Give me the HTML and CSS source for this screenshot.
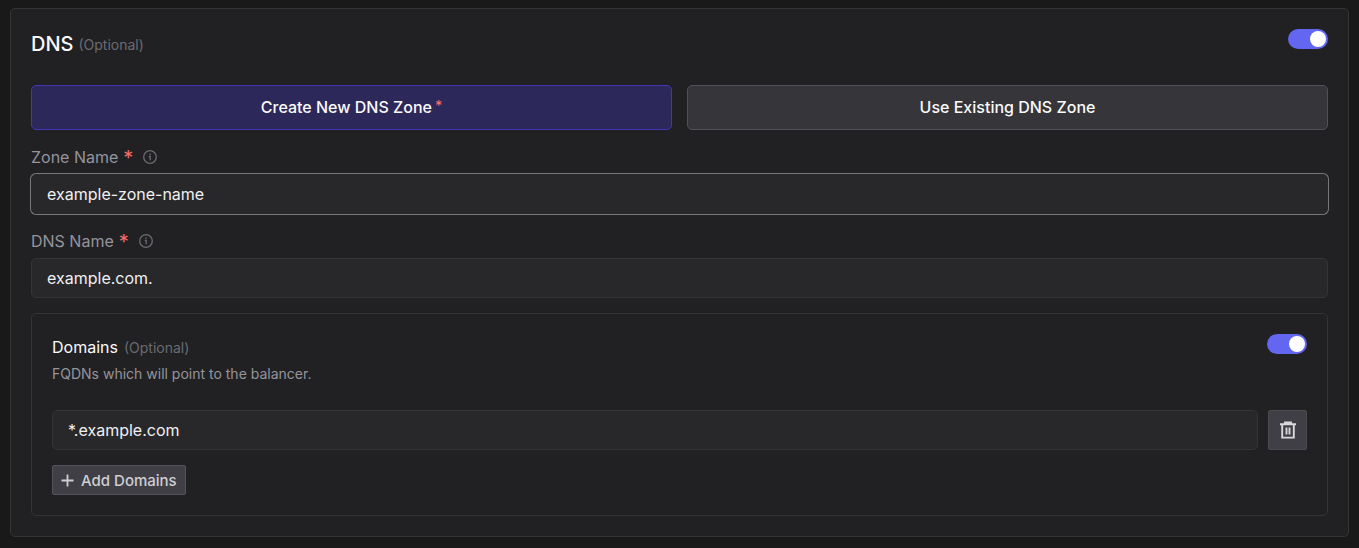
FILE: index.html
```
<!DOCTYPE html>
<html lang="en">
<head>
  <meta charset="UTF-8" />
  <meta name="viewport" content="width=device-width, initial-scale=1.0"/>
  <title>DNS</title>
  <link rel="stylesheet" href="styles.css">
</head>

<body>
  <form class="card">
    <div class="card-header">
      <h2 class="card-title"><label for="dns">DNS</label> <span class="optional">(Optional)</span></h2>
      <input type="checkbox" class="toggle" id="dns" checked>
    </div>

    <div class="tabs">
      <button type="button" class="tab active">Create New DNS Zone<span class="tab-required">*</span></button>
      <button type="button" class="tab">Use Existing DNS Zone</button>
    </div>

    <div class="field">
      <div class="field-label">
        <label for="zone-name">Zone Name<span class="required">*</span></label>
        <svg class="info" viewBox="0 0 14 14" aria-hidden="true">
          <circle cx="7" cy="7" r="6.3"/>
          <path d="M5.8 6.5h1.4v3.8M7 3.6v1.4"/>
        </svg>
      </div>
      <input type="text" class="text-input focused" id="zone-name" value="example-zone-name">
    </div>

    <div class="field">
      <div class="field-label">
        <label for="dns-name">DNS Name<span class="required">*</span></label>
        <svg class="info" viewBox="0 0 14 14" aria-hidden="true">
          <circle cx="7" cy="7" r="6.3"/>
          <path d="M5.8 6.5h1.4v3.8M7 3.6v1.4"/>
        </svg>
      </div>
      <input type="text" class="text-input" id="dns-name" value="example.com.">
    </div>

    <section class="domains">
      <div class="domains-header">
        <div>
          <h3 class="domains-title"><label for="domains">Domains</label> <span class="optional">(Optional)</span></h3>
          <p class="domains-text">FQDNs which will point to the balancer.</p>
        </div>
        <input type="checkbox" class="toggle" id="domains" checked>
      </div>

      <div class="domain-row">
        <input type="text" class="text-input" aria-label="Domain" value="*.example.com">
        <button type="button" class="delete-btn" aria-label="Delete domain">
          <svg viewBox="0 0 18 18" aria-hidden="true">
            <path d="M5 1.5h8M1 3.2h16M3.2 3v13.6h11.6V3M7.5 6.5v7M10.5 6.5v7"/>
          </svg>
        </button>
      </div>

      <button type="button" class="add-btn">
        <svg viewBox="0 0 13 13" aria-hidden="true"><path d="M6.5 0.5v12M0.5 6.5h12"/></svg>
        Add Domains
      </button>
    </section>
  </form>
</body>
</html>
```
FILE: styles.css
```
* {
  box-sizing: border-box;
}

body {
  margin: 0;
  padding: 8px 10px 11px;
  background: #19191a;
  color: #fafafa;
  font-family: 'Inter', sans-serif;
  font-size: 16px;
}

h2, h3, p {
  margin: 0;
}

button, input {
  font-family: inherit;
  font-size: 16px;
}

/* outer card */
.card {
  padding: 20px;
  background: #212123;
  border: 1px solid #343437;
  border-radius: 5px;
}

.card-header {
  display: flex;
  justify-content: space-between;
  align-items: flex-start;
  margin-bottom: 26px;
}

.card-title {
  display: flex;
  align-items: center;
  gap: 5px;
  height: 30px;
  font-size: 20px;
  font-weight: 500;
}

.optional {
  color: #6b6a71;
  font-size: 14px;
  font-weight: 400;
}

/* toggle switch */
.toggle {
  appearance: none;
  flex: none;
  display: flex;
  justify-content: flex-end;
  width: 40px;
  height: 20px;
  margin: 0;
  padding: 2px;
  border-radius: 10px;
  background: #6366f1;
  cursor: pointer;
}

.toggle::before {
  content: "";
  width: 16px;
  height: 16px;
  border-radius: 50%;
  background: white;
}

.toggle:not(:checked) {
  justify-content: flex-start;
  background: #45454b;
}

/* zone tabs */
.tabs {
  display: grid;
  grid-template-columns: 1fr 1fr;
  gap: 15px;
  margin-bottom: 15px;
}

.tab {
  height: 45px;
  padding: 0 16px 2px;
  border: 1px solid #505056;
  border-radius: 5px;
  background: #363539;
  color: #fafafa;
  font-weight: 500;
  cursor: pointer;
}

.tab.active {
  border-color: #4136b5;
  background: #2d285a;
}

.tab-required {
  margin-left: 3px;
  color: #f16c6c;
  font-size: 14px;
  line-height: 14px;
  vertical-align: 2px;
}

/* text fields */
.field {
  margin-bottom: 15px;
}

.field-label {
  display: flex;
  align-items: center;
  gap: 10px;
  height: 24px;
  margin-bottom: 5px;
  color: #95949c;
}

.required {
  margin-left: 5px;
  color: #f16c6c;
  font-size: 20px;
  line-height: 16px;
  vertical-align: -2px;
}

.info {
  width: 14px;
  height: 14px;
  fill: none;
  stroke: #6b6a71;
  stroke-width: 1.3;
}

.text-input {
  display: block;
  width: 100%;
  height: 40px;
  padding: 0 15px 1px;
  border: 1px solid #343437;
  border-radius: 5px;
  background: #28282a;
  color: #f0f0f2;
  outline: none;
}

.text-input.focused,
.text-input:focus {
  border-color: #28282a;
  box-shadow: 0 0 0 1px #77767d;
}

/* domains section */
.domains {
  padding: 20px;
  border: 1px solid #343437;
  border-radius: 5px;
}

.domains-header {
  display: flex;
  justify-content: space-between;
  align-items: flex-start;
  margin-bottom: 22px;
}

.domains-title {
  display: flex;
  align-items: center;
  gap: 6px;
  height: 26px;
  font-size: 16px;
  font-weight: 400;
}

.domains-text {
  color: #95949c;
  font-size: 14px;
  line-height: 28px;
}

.domain-row {
  display: flex;
  gap: 10px;
  margin-bottom: 15px;
}

.delete-btn {
  flex: none;
  display: flex;
  align-items: center;
  justify-content: center;
  width: 39px;
  height: 40px;
  padding: 0;
  border: 1px solid #4a4a50;
  border-radius: 2px;
  background: #403f45;
  cursor: pointer;
}

.delete-btn svg {
  width: 18px;
  height: 18px;
  fill: none;
  stroke: #d9d9dc;
  stroke-width: 1.9;
}

.add-btn {
  display: flex;
  align-items: center;
  gap: 7px;
  height: 30px;
  padding: 0 8px;
  border: 1px solid #54545b;
  border-radius: 2px;
  background: #403f45;
  color: #cfced3;
  font-size: 15px;
  font-weight: 500;
  cursor: pointer;
}

.add-btn svg {
  width: 13px;
  height: 13px;
  stroke: #cfced3;
  stroke-width: 1.8;
}
```
